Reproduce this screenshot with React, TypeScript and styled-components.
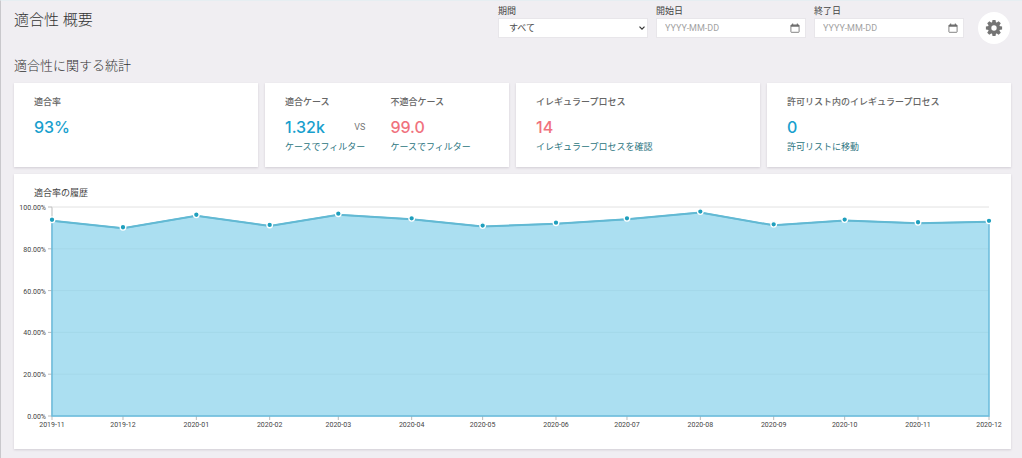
import React, { useLayoutEffect, useRef, useState } from "react";
import styled, { createGlobalStyle } from "styled-components";

const GlobalStyle = createGlobalStyle`
  *, *::before, *::after { box-sizing: border-box; }
  html { height: 100%; }
  body {
    margin: 0;
    min-height: 100%;
    background: #f0eef2;
    color: #4c4c4c;
    font-family: Roboto, "Noto Sans CJK JP", sans-serif;
    font-size: 9px;
    line-height: 12px;
  }
  button, input, select { font: inherit; color: inherit; }
`;

const Page = styled.main`
  min-height: 100vh;
  padding: 4px 11px 9px 13px;
  border-left: 1px solid #c9c8cc;
  border-top: 1px solid #e6eef2;
`;

const Header = styled.header`
  display: flex;
  align-items: flex-start;
  justify-content: space-between;
`;

const PageTitle = styled.h1`
  margin: 4px 0 0;
  font-size: 15px;
  line-height: 22px;
  font-weight: 300;
  color: #333;
`;

const Filters = styled.form`
  display: flex;
  gap: 8px;
`;

const Field = styled.div`
  display: flex;
  flex-direction: column;
  gap: 1px;
  width: 150px;
`;

const FieldLabel = styled.label`
  color: #444;
`;

const Control = styled.div`
  display: flex;
  align-items: center;
  height: 20px;
  background: #fff;
  border: 1px solid #e8e6ea;
`;

const Select = styled.select`
  flex: 1;
  min-width: 0;
  height: 18px;
  padding: 0 0 0 10px;
  border: 0;
  background: transparent;
  appearance: none;
  outline: none;
`;

const DateInput = styled.input`
  flex: 1;
  min-width: 0;
  height: 18px;
  padding: 0 0 0 8px;
  border: 0;
  background: transparent;
  outline: none;
  &::placeholder { color: #a3a3a3; opacity: 1; }
`;

const IconButton = styled.button`
  display: flex;
  padding: 0 5px;
  border: 0;
  background: none;
  color: #666;
`;

const Chevron = styled.svg`
  margin-right: 1px;
  pointer-events: none;
`;

const SettingsButton = styled.button`
  display: flex;
  align-items: center;
  justify-content: center;
  width: 32px;
  height: 32px;
  margin: 7px 1px 0 6px;
  padding: 0;
  border: 0;
  border-radius: 50%;
  background: #fff;
  color: #757575;
`;

const SectionTitle = styled.h2`
  margin: 12px 0 7px;
  font-size: 13px;
  line-height: 20px;
  font-weight: 300;
  color: #333;
`;

const Cards = styled.section`
  display: grid;
  grid-template-columns: repeat(4, 1fr);
  gap: 7px;
  margin-bottom: 7px;
`;

const Card = styled.article`
  display: flex;
  gap: 25px;
  padding: 13px 20px 14px;
  background: #fff;
  box-shadow: 0 1px 2px rgba(60, 50, 70, 0.16);
`;

const Stat = styled.div`
  display: flex;
  flex-direction: column;
`;

const StatLabel = styled.h3`
  margin: 0 0 9px;
  font-size: 9px;
  line-height: 12px;
  font-weight: 500;
  color: #666;
`;

const StatRow = styled.div`
  display: flex;
  align-items: center;
  justify-content: space-between;
  margin-bottom: 4px;
`;

const StatValue = styled.strong<{ $tone: "good" | "bad" }>`
  font-family: Inter, sans-serif;
  font-size: 16px;
  line-height: 20px;
  font-weight: 500;
  color: ${(p) => (p.$tone === "good" ? "#189fce" : "#f0727e")};
`;

const Versus = styled.span`
  color: #777;
`;

const StatLink = styled.a`
  color: #2b7480;
  text-decoration: none;
`;

const ChartCard = styled.section`
  padding: 13px 0 8px;
  background: #fff;
  box-shadow: 0 1px 2px rgba(60, 50, 70, 0.16);
`;

const ChartTitle = styled.h3`
  margin: 0 20px 1px;
  font-size: 9px;
  line-height: 12px;
  font-weight: 400;
  color: #444;
`;

const ChartFrame = styled.div`
  overflow: hidden;
`;

const ChartSvg = styled.svg`
  display: block;
  width: 100%;
  text { font-size: 7px; fill: #444; }
`;

const history: [string, number][] = [
  ["2019-11", 93.9],
  ["2019-12", 90.3],
  ["2020-01", 96.3],
  ["2020-02", 91.4],
  ["2020-03", 96.8],
  ["2020-04", 94.6],
  ["2020-05", 91.1],
  ["2020-06", 92.5],
  ["2020-07", 94.6],
  ["2020-08", 97.8],
  ["2020-09", 91.7],
  ["2020-10", 94],
  ["2020-11", 92.7],
  ["2020-12", 93.4],
];

const time = (month: string) => Date.parse(month + "-01T00:00:00Z");

function HistoryChart() {
  const frame = useRef<HTMLDivElement>(null);
  const [width, setWidth] = useState(997);

  useLayoutEffect(() => {
    const el = frame.current;
    if (!el) return;
    const update = () => setWidth(el.clientWidth);
    update();
    const observer = new ResizeObserver(update);
    observer.observe(el);
    return () => observer.disconnect();
  }, []);

  const left = 38;
  const right = width - 22;
  const top = 7;
  const bottom = 216;
  const first = time(history[0][0]);
  const last = time(history[history.length - 1][0]);
  const x = (m: string) => left + ((time(m) - first) / (last - first)) * (right - left);
  const y = (v: number) => bottom - (v / 100) * (bottom - top);
  const line = history.map(([m, v]) => `${x(m)},${y(v) + 1}`).join(" L");

  return (
    <ChartFrame ref={frame}>
      <ChartSvg height={241} role="img" aria-label="適合率の履歴">
        <path d={`M${left},${top} V${bottom}`} stroke="#bbb" />
        <path d={`M${line} L${right},${bottom} L${left},${bottom} Z`} fill="#abdff1" />
        {[0, 20, 40, 60, 80, 100].map((v) => (
          <g key={v}>
            <path d={`M${left - 4},${y(v)} H${left}`} stroke="#bbb" />
            <path
              d={`M${left},${y(v)} H${right}`}
              stroke={v === 100 ? "#e2e2e2" : "#a4d8e9"}
            />
            <text x={left - 6} y={y(v) + 3} textAnchor="end">
              {v.toFixed(2)}%
            </text>
          </g>
        ))}
        {history.map(([m]) => (
          <g key={m}>
            <path d={`M${x(m)},${bottom} v4`} stroke="#bbb" />
            <text x={x(m)} y={bottom + 11} textAnchor="middle">
              {m}
            </text>
          </g>
        ))}
        <path
          d={`M${line} L${right},${bottom} L${left},${bottom} Z`}
          fill="none"
          stroke="#6bbcdc"
          strokeWidth={1.5}
        />
        <path d={`M${line}`} fill="none" stroke="#62b9d3" strokeWidth={2} />
        {history.map(([m, v]) => (
          <circle key={m} cx={x(m)} cy={y(v)} r={2.8} fill="#1f9fbd" stroke="#fff" strokeWidth={1.3} />
        ))}
      </ChartSvg>
    </ChartFrame>
  );
}

function CalendarIcon() {
  return (
    <svg width="10" height="10" viewBox="0 0 10 10" fill="none" stroke="currentColor">
      <rect x="0.9" y="1.9" width="8.2" height="7.4" rx="0.5" strokeWidth="0.8" />
      <path d="M0.9 2.9h8.2" strokeWidth="1.6" />
      <path d="M2.7 0.5v2M7.3 0.5v2" strokeWidth="1" />
    </svg>
  );
}

function GearIcon() {
  return (
    <svg width="18" height="18" viewBox="-9 -9 18 18" fill="currentColor">
      {[0, 45, 90, 135].map((a) => (
        <path key={a} transform={`rotate(${a})`} d="M-2.1-5 L-1.5-8.1 H1.5 L2.1-5 V5 L1.5 8.1 H-1.5 L-2.1 5 Z" />
      ))}
      <circle r="6" />
      <circle r="2.7" fill="#fff" />
    </svg>
  );
}

function DateField({ id, label }: { id: string; label: string }) {
  return (
    <Field>
      <FieldLabel htmlFor={id}>{label}</FieldLabel>
      <Control>
        <DateInput id={id} type="text" placeholder="YYYY-MM-DD" />
        <IconButton type="button" aria-label={label}>
          <CalendarIcon />
        </IconButton>
      </Control>
    </Field>
  );
}

export default function App() {
  return (
    <>
      <GlobalStyle />
      <Page>
        <Header>
          <PageTitle>適合性 概要</PageTitle>
          <Filters>
            <Field>
              <FieldLabel htmlFor="period">期間</FieldLabel>
              <Control>
                <Select id="period">
                  <option>すべて</option>
                </Select>
                <Chevron width="8" height="8" viewBox="0 0 8 8" fill="none" stroke="#333" strokeWidth="1.2">
                  <path d="M1.5 2.7 L4 5.2 L6.5 2.7" />
                </Chevron>
              </Control>
            </Field>
            <DateField id="start" label="開始日" />
            <DateField id="end" label="終了日" />
            <SettingsButton type="button" aria-label="設定">
              <GearIcon />
            </SettingsButton>
          </Filters>
        </Header>

        <SectionTitle>適合性に関する統計</SectionTitle>
        <Cards>
          <Card>
            <Stat>
              <StatLabel>適合率</StatLabel>
              <StatRow>
                <StatValue $tone="good">93%</StatValue>
              </StatRow>
            </Stat>
          </Card>
          <Card>
            <Stat>
              <StatLabel>適合ケース</StatLabel>
              <StatRow>
                <StatValue $tone="good">1.32k</StatValue>
                <Versus>VS</Versus>
              </StatRow>
              <StatLink href="#conforming">ケースでフィルター</StatLink>
            </Stat>
            <Stat>
              <StatLabel>不適合ケース</StatLabel>
              <StatRow>
                <StatValue $tone="bad">99.0</StatValue>
              </StatRow>
              <StatLink href="#nonconforming">ケースでフィルター</StatLink>
            </Stat>
          </Card>
          <Card>
            <Stat>
              <StatLabel>イレギュラープロセス</StatLabel>
              <StatRow>
                <StatValue $tone="bad">14</StatValue>
              </StatRow>
              <StatLink href="#irregular">イレギュラープロセスを確認</StatLink>
            </Stat>
          </Card>
          <Card>
            <Stat>
              <StatLabel>許可リスト内のイレギュラープロセス</StatLabel>
              <StatRow>
                <StatValue $tone="good">0</StatValue>
              </StatRow>
              <StatLink href="#allowlist">許可リストに移動</StatLink>
            </Stat>
          </Card>
        </Cards>

        <ChartCard>
          <ChartTitle>適合率の履歴</ChartTitle>
          <HistoryChart />
        </ChartCard>
      </Page>
    </>
  );
}
